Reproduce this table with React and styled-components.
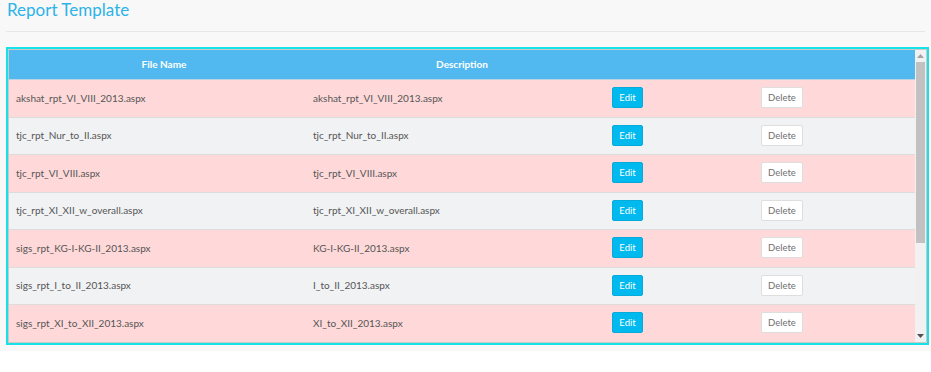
import React from 'react'
import styled, { createGlobalStyle } from 'styled-components'

const GlobalStyle = createGlobalStyle`
    body {
        margin: 0;
        background: #fff;
        font-family: "Source Sans Pro", Lato, "Liberation Sans", sans-serif;
    }
`

const templates = [
    { file: 'akshat_rpt_VI_VIII_2013.aspx', desc: 'akshat_rpt_VI_VIII_2013.aspx' },
    { file: 'tjc_rpt_Nur_to_II.aspx', desc: 'tjc_rpt_Nur_to_II.aspx' },
    { file: 'tjc_rpt_VI_VIII.aspx', desc: 'tjc_rpt_VI_VIII.aspx' },
    { file: 'tjc_rpt_XI_XII_w_overall.aspx', desc: 'tjc_rpt_XI_XII_w_overall.aspx' },
    { file: 'sigs_rpt_KG-I-KG-II_2013.aspx', desc: 'KG-I-KG-II_2013.aspx' },
    { file: 'sigs_rpt_I_to_II_2013.aspx', desc: 'I_to_II_2013.aspx' },
    { file: 'sigs_rpt_XI_to_XII_2013.aspx', desc: 'XI_to_XII_2013.aspx' },
]

export default function App() {
    return (
        <Page>
            <GlobalStyle />
            <Title>Report Template</Title>
            <Divider />
            <Frame>
                <Viewport>
                    <TableArea>
                        <Table>
                            <colgroup>
                                <col style={{ width: 296 }} />
                                <col style={{ width: 300 }} />
                                <col style={{ width: 148 }} />
                                <col />
                            </colgroup>
                            <thead>
                                <tr>
                                    <HeadCell>File Name</HeadCell>
                                    <HeadCell>Description</HeadCell>
                                    <HeadCell />
                                    <HeadCell />
                                </tr>
                            </thead>
                            <tbody>
                                {templates.map((t, i) => (
                                    <Row key={t.file} $odd={i % 2 === 0}>
                                        <Cell>{t.file}</Cell>
                                        <Cell $pl={8}>{t.desc}</Cell>
                                        <Cell><EditButton>Edit</EditButton></Cell>
                                        <Cell $pl={8}><DeleteButton>Delete</DeleteButton></Cell>
                                    </Row>
                                ))}
                            </tbody>
                        </Table>
                    </TableArea>
                    <ScrollTrack>
                        <ScrollArrow>
                            <svg width="7" height="4" viewBox="0 0 7 4"><polygon points="0,4 7,4 3.5,0" fill="#a3a3a3" /></svg>
                        </ScrollArrow>
                        <TrackBody>
                            <Thumb />
                        </TrackBody>
                        <ScrollArrow>
                            <svg width="7" height="4" viewBox="0 0 7 4"><polygon points="0,0 7,0 3.5,4" fill="#505050" /></svg>
                        </ScrollArrow>
                    </ScrollTrack>
                </Viewport>
            </Frame>
        </Page>
    )
}

const Page = styled.div`
    background: #f8f8f8;
    padding: 1px 2px 6px 6px;
`

const Title = styled.h3`
    margin: 0;
    padding: 0 0 0 1px;
    height: 23px;
    line-height: 17px;
    font-size: 17px;
    font-weight: 400;
    color: #2cb3e8;
`

const Divider = styled.div`
    height: 1px;
    background: #e6e6e6;
    margin: 7px 4px 15px 0;
`

const Frame = styled.div`
    border: 2px solid #17e2e8;
`

const Viewport = styled.div`
    display: flex;
    height: 292px;
    border: 1px solid #c9c9c9;
    background: #fff;
`

const TableArea = styled.div`
    flex: 1;
    overflow: hidden;
`

const ScrollTrack = styled.div`
    width: 11px;
    display: flex;
    flex-direction: column;
    background: #f1f1f1;
`

const ScrollArrow = styled.div`
    height: 12px;
    display: flex;
    align-items: center;
    justify-content: center;
`

const TrackBody = styled.div`
    flex: 1;
    padding: 0 1px;
`

const Thumb = styled.div`
    height: 181px;
    background: #c1c1c1;
`

const Table = styled.table`
    width: 100%;
    table-layout: fixed;
    border-collapse: collapse;
    font-size: 10px;
    color: #555;
`

const HeadCell = styled.th`
    height: 27px;
    padding: 0 8px 2px 22px;
    background: #51b9ef;
    color: #fff;
    font-weight: 700;
    font-size: 10px;
    text-align: center;
    border-bottom: 1px solid #b9d3e3;
`

const Row = styled.tr`
    height: 37.5px;
    background: ${p => (p.$odd ? '#ffd9d9' : '#f1f2f4')};
    border-bottom: 1px solid #dcdcdc;
`

const Cell = styled.td`
    padding: 0 8px 1px ${p => (p.$pl ? `${p.$pl}px` : '7px')};
    vertical-align: middle;
    white-space: nowrap;
`

const ButtonBase = styled.button`
    display: block;
    font-family: inherit;
    font-size: 9.5px;
    height: 21px;
    border-radius: 2px;
    cursor: pointer;
    padding: 0;
`

const EditButton = styled(ButtonBase)`
    width: 31px;
    background: #00b9ee;
    border: 1px solid #06abdc;
    color: #fff;
`

const DeleteButton = styled(ButtonBase)`
    width: 42px;
    background: #fff;
    border: 1px solid #dedede;
    color: #707070;
`
